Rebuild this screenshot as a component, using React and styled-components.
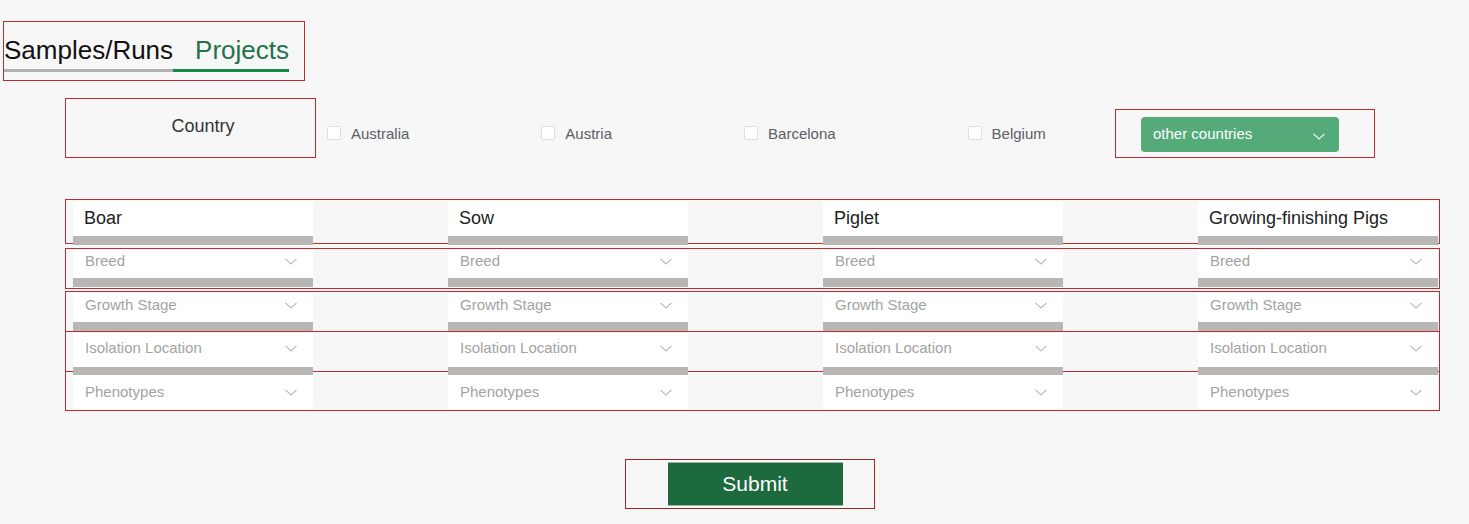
import styled, { createGlobalStyle } from 'styled-components';

const GlobalStyle = createGlobalStyle`
  body {
    margin: 0;
    background: #f7f7f7;
    font-family: 'Liberation Sans', Arial, sans-serif;
  }
  * { box-sizing: border-box; }
`;

const RED = '#bf2b30';

const Page = styled.div`
  padding-top: 21px;
`;

/* ---------- вкладки ---------- */
const TabBar = styled.div`
  display: flex;
  width: 302px;
  height: 60px;
  margin-left: 3px;
  padding-top: 13px;
  border: 1px solid ${RED};
`;

const Tab = styled.div`
  font-size: 26px;
  line-height: 30px;
  padding: 0 0 4px ${props => props.$pad || 0}px;
  height: 37px;
  color: ${props => (props.$active ? '#23734a' : '#111')};
  border-bottom: 3px solid ${props => (props.$active ? '#17883f' : '#b1b1b1')};
  white-space: nowrap;
`;

/* ---------- страны ---------- */
const FilterRow = styled.div`
  display: flex;
  align-items: center;
  width: 1310px;
  margin: 17px 0 0 65px;
`;

const CountryBox = styled.div`
  width: 251px;
  height: 60px;
  border: 1px solid ${RED};
  display: flex;
  align-items: center;
  justify-content: center;
  padding: 0 0 4px 25px;
  font-size: 18px;
  color: #333;
`;

const CheckList = styled.div`
  display: flex;
  gap: 132px;
  margin: 10px 0 0 11px;
`;

const CheckLabel = styled.label`
  display: flex;
  align-items: center;
  gap: 10px;
  font-size: 15px;
  color: #5a5e66;
`;

const CheckBox = styled.input`
  appearance: none;
  margin: 0;
  width: 14px;
  height: 14px;
  background: #fff;
  border: 1px solid #dcdfe6;
  border-radius: 2px;
`;

const DropWrap = styled.div`
  width: 260px;
  height: 49px;
  margin: 11px 0 0 auto;
  padding: 7px 0 0 25px;
  border: 1px solid ${RED};
`;

const GreenSelect = styled.button`
  width: 198px;
  height: 35px;
  display: flex;
  align-items: center;
  justify-content: space-between;
  padding: 0 14px 2px 12px;
  background: #55aa79;
  border: none;
  border-radius: 4px;
  color: #fff;
  font-family: inherit;
  font-size: 15px;
`;

/* ---------- сетка ---------- */
const Grid = styled.div`
  margin: 41px 29px 0 65px;
`;

const Row = styled.div`
  display: flex;
  justify-content: space-between;
  align-items: flex-start;
  height: ${props => props.$h}px;
  margin-top: ${props => props.$mt || 0}px;
  padding: ${props => props.$pt || 1}px 1px 0 7px;
  border: 1px solid ${RED};
`;

const Cell = styled.div`
  flex-shrink: 0;
  display: flex;
  align-items: flex-start;
  justify-content: space-between;
  width: ${props => 240 - 16 - (props.$left || 12)}px;
  height: ${props => props.$h}px;
  padding: ${props => props.$top}px 16px 0 ${props => props.$left || 12}px;
  box-sizing: content-box;
  background: #fff;
  border-bottom: ${props => (props.$bar ? `${props.$bar}px solid #b9b6b6` : 'none')};
  border-radius: ${props => (props.$bar ? '0' : '0 0 4px 4px')};
`;

const Title = styled.span`
  font-size: 18px;
  line-height: 22px;
  color: #222;
`;

const Placeholder = styled.span`
  font-size: 15px;
  line-height: 18px;
  color: #a3a3a3;
`;

const Chevron = ({ color = '#b8b8b8' }) => (
  <svg width="12" height="7" viewBox="0 0 12 7" style={{ marginTop: 6, flexShrink: 0 }}>
    <polyline points="0.5,0.8 6,6 11.5,0.8" fill="none" stroke={color} strokeWidth="1.1" />
  </svg>
);

/* ---------- отправка ---------- */
const SubmitBox = styled.div`
  width: 250px;
  height: 50px;
  margin: 48px auto 0;
  padding: 2px 0 0 42px;
  border: 1px solid #9b2727;
  position: relative;
  left: -3px;
`;

const SubmitButton = styled.button`
  width: 175px;
  height: 44px;
  background: #1d6a3e;
  border: none;
  border-top: 1px solid #9bb7a5;
  border-bottom: 1px solid #9bb7a5;
  color: #fff;
  font-family: inherit;
  font-size: 21px;
`;

const animals = ['Boar', 'Sow', 'Piglet', 'Growing-finishing Pigs'];
const countries = ['Australia', 'Austria', 'Barcelona', 'Belgium'];

const selectRows = [
  { label: 'Breed', row: { $h: 41, $mt: 4 }, cell: { $h: 26, $top: 2, $bar: 9 } },
  { label: 'Growth Stage', row: { $h: 41, $mt: 2 }, cell: { $h: 26, $top: 3, $bar: 9 } },
  { label: 'Isolation Location', row: { $h: 41, $mt: -1 }, cell: { $h: 28, $top: 6, $bar: 8 } },
  { label: 'Phenotypes', row: { $h: 40, $mt: -1, $pt: 3 }, cell: { $h: 26, $top: 8 } },
];

export default function App() {
  return (
    <Page>
      <GlobalStyle />
      <TabBar>
        <Tab>Samples/Runs</Tab>
        <Tab $active $pad={22}>Projects</Tab>
      </TabBar>

      <FilterRow>
        <CountryBox>Country</CountryBox>
        <CheckList>
          {countries.map(c => (
            <CheckLabel key={c}>
              <CheckBox type="checkbox" />
              {c}
            </CheckLabel>
          ))}
        </CheckList>
        <DropWrap>
          <GreenSelect type="button">
            other countries
            <Chevron color="#fff" />
          </GreenSelect>
        </DropWrap>
      </FilterRow>

      <Grid>
        <Row $h={45}>
          {animals.map(a => (
            <Cell key={a} $h={29} $top={6} $left={11} $bar={9}>
              <Title>{a}</Title>
            </Cell>
          ))}
        </Row>
        {selectRows.map(r => (
          <Row key={r.label} {...r.row}>
            {animals.map(a => (
              <Cell key={a} {...r.cell}>
                <Placeholder>{r.label}</Placeholder>
                <Chevron />
              </Cell>
            ))}
          </Row>
        ))}
        <SubmitBox>
          <SubmitButton type="button">Submit</SubmitButton>
        </SubmitBox>
      </Grid>
    </Page>
  );
}
